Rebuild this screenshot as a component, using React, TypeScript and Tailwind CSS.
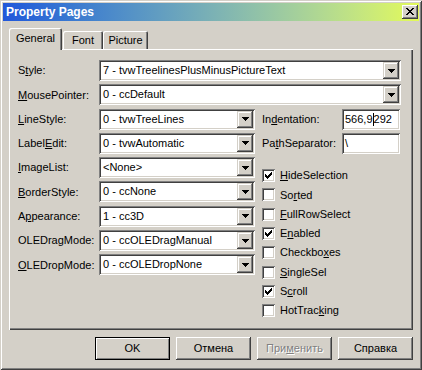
import React from 'react';

const leftRows = [
  { label: 'LineStyle:', key: 0, value: '0 - tvwTreeLines' },
  { label: 'LabelEdit:', key: 5, value: '0 - tvwAutomatic' },
  { label: 'ImageList:', key: 0, value: '<None>' },
  { label: 'BorderStyle:', key: 0, value: '0 - ccNone' },
  { label: 'Appearance:', key: 1, value: '1 - cc3D' },
  { label: 'OLEDragMode:', key: -1, value: '0 - ccOLEDragManual' },
  { label: 'OLEDropMode:', key: 0, value: '0 - ccOLEDropNone' },
];

const checks = [
  { label: 'HideSelection', key: 0, on: true },
  { label: 'Sorted', key: 2, on: false },
  { label: 'FullRowSelect', key: 0, on: false },
  { label: 'Enabled', key: 1, on: true },
  { label: 'Checkboxes', key: 7, on: false },
  { label: 'SingleSel', key: 0, on: false },
  { label: 'Scroll', key: 1, on: true },
  { label: 'HotTracking', key: 7, on: false },
];

// text with the access key underlined
function Ul({ text, at }: { text: string; at: number }) {
  if (at < 0) return <>{text}</>;
  return (
    <>
      {text.slice(0, at)}
      <u className="underline-offset-[1px]">{text[at]}</u>
      {text.slice(at + 1)}
    </>
  );
}

function Arrow() {
  return (
    <svg width="7" height="4" viewBox="0 0 7 4" shapeRendering="crispEdges">
      <path d="M0 0h7v1h-7z M1 1h5v1h-5z M2 2h3v1h-3z M3 3h1v1h-1z" fill="#000" />
    </svg>
  );
}

function Combo({ value, wide }: { value: string; wide?: boolean }) {
  return (
    <div
      className={
        (wide ? 'w-[302px] ' : 'w-[156px] ') +
        'flex h-[21px] items-center bg-white shadow-[inset_1px_1px_0_#808080,inset_-1px_-1px_0_#fff,inset_2px_2px_0_#404040,inset_-2px_-2px_0_#d4d0c8]'
      }
    >
      <span className="flex-1 truncate pl-[4px] leading-none">{value}</span>
      <div className="mr-[2px] flex h-[17px] w-[16px] items-center justify-center bg-[#d4d0c8] shadow-[inset_-1px_-1px_0_#404040,inset_1px_1px_0_#d4d0c8,inset_-2px_-2px_0_#808080,inset_2px_2px_0_#fff]">
        <Arrow />
      </div>
    </div>
  );
}

function Field({ children }: { children: React.ReactNode }) {
  return (
    <div className="flex h-[21px] w-[58px] items-center bg-white pl-[3px] shadow-[inset_1px_1px_0_#808080,inset_-1px_-1px_0_#fff,inset_2px_2px_0_#404040,inset_-2px_-2px_0_#d4d0c8]">
      {children}
    </div>
  );
}

function CheckBox({ on }: { on: boolean }) {
  return (
    <div className="flex h-[13px] w-[13px] items-start bg-white pl-[3px] pt-[3px] shadow-[inset_1px_1px_0_#808080,inset_-1px_-1px_0_#fff,inset_2px_2px_0_#404040,inset_-2px_-2px_0_#d4d0c8]">
      {on && (
        <svg width="7" height="7" viewBox="0 0 7 7" shapeRendering="crispEdges">
          <path
            d="M6 0h1v1h-1z M5 1h2v1h-2z M0 2h1v1h-1z M4 2h3v1h-3z M0 3h2v1h-2z M3 3h3v1h-3z M0 4h5v1h-5z M1 5h3v1h-3z M2 6h1v1h-1z"
            fill="#000"
          />
        </svg>
      )}
    </div>
  );
}

function Button({ children, isDefault, disabled }: { children: React.ReactNode; isDefault?: boolean; disabled?: boolean }) {
  return (
    <div
      className={
        isDefault
          ? 'flex h-[23px] w-[75px] items-center justify-center border border-black shadow-[inset_1px_1px_0_#fff,inset_-1px_-1px_0_#808080]'
          : 'flex h-[23px] w-[75px] items-center justify-center shadow-[inset_-1px_-1px_0_#404040,inset_1px_1px_0_#fff,inset_-2px_-2px_0_#808080,inset_2px_2px_0_#d4d0c8]'
      }
    >
      <span className={disabled ? 'text-[#808080] [text-shadow:1px_1px_0_#fff]' : 'text-black'}>{children}</span>
    </div>
  );
}

export default function App() {
  return (
    <div className="h-[370px] w-[422px] bg-[#d4d0c8] p-[3px] font-['Liberation_Sans',Arial,sans-serif] text-[11px] text-black shadow-[inset_1px_1px_0_#d4d0c8,inset_-1px_-1px_0_#404040,inset_2px_2px_0_#fff,inset_-2px_-2px_0_#808080]">
      {/* Title bar */}
      <div className="flex h-[18px] items-center bg-linear-to-r from-[#2257da] to-[#e3fa56] pl-[3px]">
        <span className="flex-1 text-[12px] font-bold text-white">Property Pages</span>
        <div className="mr-[1px] flex h-[14px] w-[16px] items-center justify-center bg-[#d4d0c8] pb-px shadow-[inset_-1px_-1px_0_#404040,inset_1px_1px_0_#fff,inset_-2px_-2px_0_#808080,inset_2px_2px_0_#d4d0c8]">
          <svg width="8" height="7" viewBox="0 0 8 7" shapeRendering="crispEdges">
            <path
              d="M0 0h2v1h-2z M6 0h2v1h-2z M1 1h2v1h-2z M5 1h2v1h-2z M2 2h4v1h-4z M3 3h2v1h-2z M2 4h4v1h-4z M1 5h2v1h-2z M5 5h2v1h-2z M0 6h2v1h-2z M6 6h2v1h-2z"
              fill="#000"
            />
          </svg>
        </div>
      </div>

      {/* Tabs */}
      <div className="mt-[7px] flex h-[21px] items-end pl-[6px]">
        <div className="relative z-10 -mb-px flex h-[22px] w-[53px] items-center justify-center rounded-t-[2px] bg-[#d4d0c8] pb-[2px] shadow-[inset_1px_1px_0_#fff,inset_-1px_0_0_#404040,inset_-2px_0_0_#808080]">
          General
        </div>
        <div className="ml-px flex h-[18px] w-[40px] items-center justify-center rounded-t-[2px] shadow-[inset_1px_1px_0_#fff,inset_-1px_0_0_#404040,inset_-2px_0_0_#808080]">
          Font
        </div>
        <div className="flex h-[18px] w-[45px] items-center justify-center rounded-t-[2px] shadow-[inset_1px_1px_0_#fff,inset_-1px_0_0_#404040,inset_-2px_0_0_#808080]">
          Picture
        </div>
      </div>

      {/* Tab panel */}
      <div className="ml-[6px] flex h-[281px] w-[404px] flex-col gap-[3.3px] pl-[9px] pt-[11px] shadow-[inset_1px_1px_0_#fff,inset_-1px_-1px_0_#404040,inset_-2px_-2px_0_#808080]">
        <div className="flex items-center">
          <span className="w-[81px]"><Ul text="Style:" at={1} /></span>
          <Combo wide value="7 - tvwTreelinesPlusMinusPictureText" />
        </div>
        <div className="flex items-center">
          <span className="w-[81px]"><Ul text="MousePointer:" at={0} /></span>
          <Combo wide value="0 - ccDefault" />
        </div>

        <div className="flex">
          <div className="flex flex-col gap-[3.3px]">
            {leftRows.map((row) => (
              <div key={row.label} className="flex items-center">
                <span className="w-[81px]"><Ul text={row.label} at={row.key} /></span>
                <Combo value={row.value} />
              </div>
            ))}
          </div>

          <div className="ml-[7px] flex flex-col">
            <div className="flex items-center">
              <span className="w-[80px]"><Ul text="Indentation:" at={2} /></span>
              <Field>
                <span className="leading-none">566,9</span>
                <span className="inline-block h-[13px] w-0 border-l border-black" />
                <span className="leading-none">292</span>
              </Field>
            </div>
            <div className="mt-[3.3px] flex items-center">
              <span className="w-[80px]"><Ul text="PathSeparator:" at={2} /></span>
              <Field>
                <span className="leading-none">\</span>
              </Field>
            </div>

            <div className="mt-[12px] flex flex-col">
              {checks.map((c) => (
                <div key={c.label} className="flex h-[19.3px] items-center">
                  <CheckBox on={c.on} />
                  <span className="ml-[5px]"><Ul text={c.label} at={c.key} /></span>
                </div>
              ))}
            </div>
          </div>
        </div>
      </div>

      {/* Buttons */}
      <div className="mr-[6px] mt-[7px] flex justify-end gap-[6px]">
        <Button isDefault>OK</Button>
        <Button>Отмена</Button>
        <Button disabled>
          <Ul text="Применить" at={3} />
        </Button>
        <Button>Справка</Button>
      </div>
    </div>
  );
}
